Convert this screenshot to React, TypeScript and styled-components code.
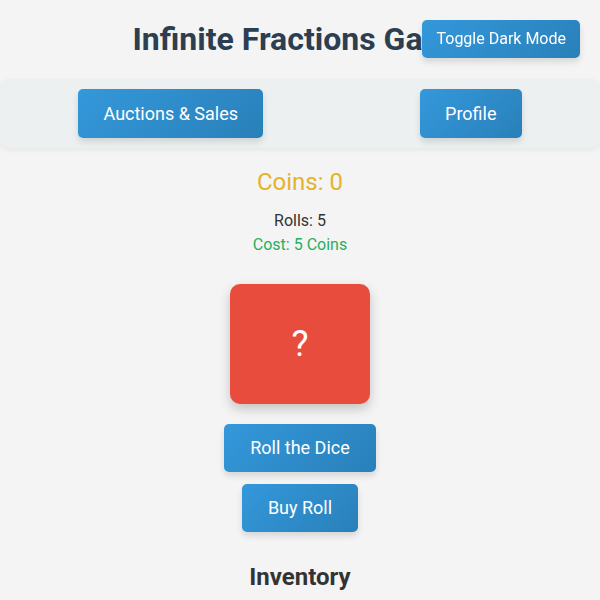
import React, { useState } from 'react'
import styled, { createGlobalStyle } from 'styled-components'

const GlobalStyle = createGlobalStyle`
  body {
    margin: 0;
    background: #f4f4f4;
    font-family: Roboto, "Liberation Sans", sans-serif;
    color: #333;
  }
`

const App = () => {
  const [coins] = useState(0)
  const [rolls] = useState(5)
  const [dark, setDark] = useState(false)

  return (
    <>
      <GlobalStyle />
      <Page>
        <Title>Infinite Fractions Game</Title>
        <ToggleButton onClick={() => setDark(!dark)}>Toggle Dark Mode</ToggleButton>
        <NavBar>
          <NavButton>Auctions &amp; Sales</NavButton>
          <NavButton>Profile</NavButton>
        </NavBar>
        <Stats>
          <Coins>Coins: {coins}</Coins>
          <Rolls>Rolls: {rolls}</Rolls>
          <Cost>Cost: 5 Coins</Cost>
        </Stats>
        <Dice>?</Dice>
        <Actions>
          <ActionButton>Roll the Dice</ActionButton>
          <ActionButton>Buy Roll</ActionButton>
        </Actions>
        <SectionTitle>Inventory</SectionTitle>
      </Page>
    </>
  )
}

const Page = styled.div`
  display: flex;
  flex-direction: column;
  align-items: center;
  text-align: center;
`

const Title = styled.h1`
  margin: 21px 0;
  font-size: 32px;
  font-weight: 700;
  line-height: 37px;
  color: #2c3e50;
`

const Button = styled.button`
  font-family: Roboto, "Liberation Sans", sans-serif;
  color: #fff;
  border: none;
  border-radius: 5px;
  background: linear-gradient(135deg, #3498db, #2980b9);
  box-shadow: 0 4px 6px rgba(0, 0, 0, 0.12);
  cursor: pointer;
`

const ToggleButton = styled(Button)`
  position: fixed;
  top: 20px;
  right: 20px;
  font-size: 16px;
  line-height: 19px;
  padding: 9px 14px 10px;
`

const NavBar = styled.nav`
  align-self: stretch;
  display: flex;
  justify-content: space-around;
  align-items: center;
  padding: 10px 0;
  background: #ecf0f1;
  border-radius: 8px;
  box-shadow: 0 2px 5px rgba(0, 0, 0, 0.06);
`

const NavButton = styled(Button)`
  font-size: 18px;
  line-height: 21px;
  padding: 14px 25px;
`

const Stats = styled.div`
  display: flex;
  flex-direction: column;
  align-items: center;
  margin-top: 20px;
`

const Coins = styled.div`
  font-size: 24px;
  line-height: 28px;
  color: #e5b22d;
`

const Rolls = styled.div`
  margin-top: 15px;
  font-size: 16px;
  line-height: 19px;
  color: #333;
`

const Cost = styled.div`
  margin-top: 5px;
  font-size: 16px;
  line-height: 19px;
  color: #27ae60;
`

const Dice = styled.div`
  margin-top: 30px;
  width: 140px;
  height: 120px;
  display: flex;
  align-items: center;
  justify-content: center;
  background: #e74c3c;
  color: #fff;
  font-size: 36px;
  border-radius: 10px;
  box-shadow: 0 5px 12px rgba(0, 0, 0, 0.2);
`

const Actions = styled.div`
  display: flex;
  flex-direction: column;
  align-items: center;
  gap: 12px;
  margin-top: 20px;
`

const ActionButton = styled(Button)`
  font-size: 18px;
  line-height: 22px;
  padding: 13px 26px;
`

const SectionTitle = styled.h2`
  margin: 31px 0 0;
  font-size: 24px;
  font-weight: 700;
  line-height: 28px;
  color: #333;
`

export default App
